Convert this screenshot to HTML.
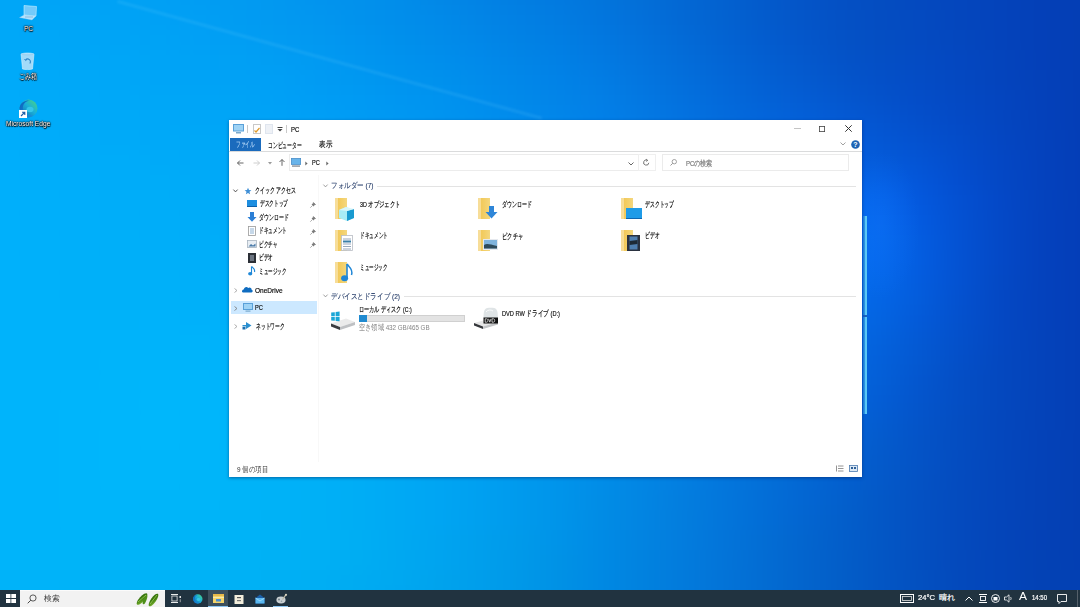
<!DOCTYPE html>
<html><head><meta charset="utf-8">
<style>
*{margin:0;padding:0;box-sizing:border-box}
html,body{width:1080px;height:607px;overflow:hidden}
body{position:relative;font-family:"Liberation Sans",sans-serif;background:#0a7fe0}
#bg{position:absolute;left:-40px;top:-40px;width:1160px;height:687px;filter:blur(8px)}
.a{position:absolute}
.t{position:absolute;white-space:nowrap;font-size:8px;color:#111;line-height:10px;transform-origin:0 0;-webkit-text-stroke:0.2px currentColor}
.l{font-size:7px}
.g{color:#7a7a7a}
.fd{position:absolute;width:12px;height:21px;background:linear-gradient(90deg,#f7dd98 0,#f7dd98 3px,#f2c95a 3px,#f3cf68 7px,#f4d77f 100%)}
.sep{position:absolute;background:#e3e3e3}
#win{position:absolute;left:229px;top:120px;width:633px;height:357px;background:#fff;box-shadow:0 1px 3px rgba(0,30,90,0.5)}
#taskbar{position:absolute;left:0;top:590px;width:1080px;height:17px;background:#213340}
svg{position:absolute;overflow:visible}
</style></head><body>
<div id="bg">
<div style="position:absolute;left:0;top:10px;width:1160px;height:20px;background:linear-gradient(90deg,#00a6f7 0px,#00a5f7 40px,#00a4f6 80px,#00a2f5 120px,#00a0f4 160px,#019ef3 200px,#019cf2 240px,#0299f1 280px,#0296ef 320px,#0293ed 360px,#028feb 400px,#028be9 440px,#0286e6 480px,#0281e4 520px,#027de1 560px,#0278de 600px,#0273db 640px,#036dd7 680px,#0367d3 720px,#0361cf 760px,#035bcb 800px,#0355c7 840px,#0450c4 880px,#044dc1 920px,#0449be 960px,#0446bc 1000px,#0443ba 1040px,#0440b7 1080px,#043eb5 1120px,#043cb3 1160px)"></div>
<div style="position:absolute;left:0;top:30px;width:1160px;height:20px;background:linear-gradient(90deg,#00a7f8 0px,#00a6f7 40px,#00a5f7 80px,#00a3f6 120px,#00a2f5 160px,#01a0f4 200px,#019df3 240px,#029bf1 280px,#0298f0 320px,#0294ee 360px,#0291ec 400px,#018dea 440px,#0288e7 480px,#0283e5 520px,#027ee2 560px,#027ae0 600px,#0275dc 640px,#036fd8 680px,#0368d4 720px,#0362d0 760px,#035bcc 800px,#0455c8 840px,#0450c4 880px,#044dc1 920px,#0449bf 960px,#0446bd 1000px,#0443ba 1040px,#0440b7 1080px,#043eb5 1120px,#043cb3 1160px)"></div>
<div style="position:absolute;left:0;top:50px;width:1160px;height:20px;background:linear-gradient(90deg,#00a8f8 0px,#00a7f8 40px,#00a6f7 80px,#00a5f7 120px,#00a3f6 160px,#00a1f5 200px,#019ff4 240px,#019cf2 280px,#0299f1 320px,#0296ef 360px,#0192ed 400px,#018eeb 440px,#018ae9 480px,#0285e6 520px,#0280e4 560px,#027ce1 600px,#0276de 640px,#0370da 680px,#0369d5 720px,#0363d1 760px,#035ccd 800px,#0456c9 840px,#0451c5 880px,#044dc2 920px,#044ac0 960px,#0446bd 1000px,#0443bb 1040px,#0440b8 1080px,#043eb5 1120px,#043cb3 1160px)"></div>
<div style="position:absolute;left:0;top:70px;width:1160px;height:20px;background:linear-gradient(90deg,#00a9f9 0px,#00a8f8 40px,#00a7f8 80px,#00a6f7 120px,#00a4f6 160px,#00a3f5 200px,#01a0f5 240px,#019ef3 280px,#029bf2 320px,#0298f0 360px,#0194ef 400px,#0090ec 440px,#018cea 480px,#0187e8 520px,#0182e5 560px,#017ee3 600px,#0278e0 640px,#0372dc 680px,#036bd7 720px,#0364d3 760px,#035dcf 800px,#0457cb 840px,#0452c6 880px,#044ec3 920px,#044ac1 960px,#0447be 1000px,#0443bb 1040px,#0440b8 1080px,#043eb5 1120px,#043bb3 1160px)"></div>
<div style="position:absolute;left:0;top:90px;width:1160px;height:20px;background:linear-gradient(90deg,#00aaf9 0px,#00a9f9 40px,#00a8f8 80px,#00a7f8 120px,#00a6f7 160px,#00a4f6 200px,#00a2f5 240px,#01a0f4 280px,#019df3 320px,#019af2 360px,#0196f0 400px,#0092ee 440px,#008eec 480px,#018aea 520px,#0185e7 560px,#0180e5 600px,#027ae2 640px,#0374de 680px,#036dd9 720px,#0366d5 760px,#035fd1 800px,#0459cd 840px,#0453c8 880px,#044fc5 920px,#044bc3 960px,#0447c0 1000px,#0444bc 1040px,#0440b9 1080px,#043eb6 1120px,#043bb3 1160px)"></div>
<div style="position:absolute;left:0;top:110px;width:1160px;height:20px;background:linear-gradient(90deg,#00abf9 0px,#00aaf9 40px,#00a9f9 80px,#00a8f8 120px,#00a7f7 160px,#00a5f7 200px,#00a3f6 240px,#01a1f5 280px,#019ff5 320px,#019bf3 360px,#0098f1 400px,#0094ef 440px,#0091ed 480px,#018ceb 520px,#0187e9 560px,#0182e7 600px,#027de4 640px,#0376e0 680px,#036fdc 720px,#0368d8 760px,#0361d4 800px,#045bd0 840px,#0455cb 880px,#0450c8 920px,#044cc5 960px,#0448c1 1000px,#0444bd 1040px,#0441b9 1080px,#043eb6 1120px,#043bb3 1160px)"></div>
<div style="position:absolute;left:0;top:130px;width:1160px;height:20px;background:linear-gradient(90deg,#00acfa 0px,#00abfa 40px,#00aaf9 80px,#00a9f9 120px,#00a8f8 160px,#00a7f7 200px,#00a5f7 240px,#00a3f6 280px,#00a0f6 320px,#009df5 360px,#009af3 400px,#0096f1 440px,#0093ef 480px,#008eed 520px,#0189ea 560px,#0284e8 600px,#037fe6 640px,#0378e2 680px,#0371de 720px,#036adb 760px,#0363d7 800px,#045dd4 840px,#0457cf 880px,#0452cb 920px,#044dc8 960px,#0449c3 1000px,#0445bf 1040px,#0441ba 1080px,#043eb6 1120px,#043bb4 1160px)"></div>
<div style="position:absolute;left:0;top:150px;width:1160px;height:20px;background:linear-gradient(90deg,#00acfa 0px,#00acfa 40px,#00abf9 80px,#00aaf9 120px,#00a9f8 160px,#00a8f8 200px,#00a6f7 240px,#00a4f7 280px,#00a2f7 320px,#009ff6 360px,#009bf4 400px,#0098f2 440px,#0094f0 480px,#0090ee 520px,#018bec 560px,#0286ea 600px,#0280e8 640px,#037ae4 680px,#0373e1 720px,#036cdd 760px,#0366db 800px,#0360d8 840px,#045ad4 880px,#0454d0 920px,#044fcb 960px,#044ac6 1000px,#0446c0 1040px,#0441bb 1080px,#043eb7 1120px,#043bb4 1160px)"></div>
<div style="position:absolute;left:0;top:170px;width:1160px;height:20px;background:linear-gradient(90deg,#00adfa 0px,#00adfa 40px,#00acfa 80px,#00abf9 120px,#00aaf8 160px,#00a9f8 200px,#00a8f7 240px,#00a6f7 280px,#00a3f7 320px,#00a0f6 360px,#009df4 400px,#009af3 440px,#0096f1 480px,#0091ef 520px,#018ced 560px,#0287eb 600px,#0282e9 640px,#037be6 680px,#0375e3 720px,#036ee0 760px,#0368de 800px,#0363dc 840px,#035dd9 880px,#0457d4 920px,#0451cf 960px,#044cc9 1000px,#0446c2 1040px,#0442bc 1080px,#043eb7 1120px,#043bb4 1160px)"></div>
<div style="position:absolute;left:0;top:190px;width:1160px;height:20px;background:linear-gradient(90deg,#00aefb 0px,#00aefb 40px,#00adfa 80px,#00acf9 120px,#00acf9 160px,#00aaf8 200px,#00a9f8 240px,#00a7f8 280px,#00a5f7 320px,#00a2f6 360px,#009ef5 400px,#009bf3 440px,#0097f2 480px,#0093f0 520px,#018eee 560px,#0288ec 600px,#0283ea 640px,#037de7 680px,#0377e5 720px,#0370e3 760px,#036be1 800px,#0366e0 840px,#0360de 880px,#045ad9 920px,#0454d4 960px,#044dcc 1000px,#0447c4 1040px,#0442bd 1080px,#043eb7 1120px,#043bb4 1160px)"></div>
<div style="position:absolute;left:0;top:210px;width:1160px;height:20px;background:linear-gradient(90deg,#00affb 0px,#00affb 40px,#00aefa 80px,#00adfa 120px,#00acf9 160px,#00acf8 200px,#00aaf8 240px,#00a8f8 280px,#00a6f7 320px,#00a3f7 360px,#00a0f5 400px,#009cf4 440px,#0098f2 480px,#0094f1 520px,#018fef 560px,#018aed 600px,#0284eb 640px,#037ee9 680px,#0378e7 720px,#0373e5 760px,#036de4 800px,#0369e4 840px,#0364e4 880px,#035ee2 920px,#0456d9 960px,#044ecf 1000px,#0448c5 1040px,#0442be 1080px,#043eb8 1120px,#043bb4 1160px)"></div>
<div style="position:absolute;left:0;top:230px;width:1160px;height:20px;background:linear-gradient(90deg,#00b0fb 0px,#00affb 40px,#00affa 80px,#00aefa 120px,#00adf9 160px,#00adf8 200px,#00abf8 240px,#00a9f8 280px,#00a7f8 320px,#00a4f7 360px,#00a1f6 400px,#009df4 440px,#0099f3 480px,#0095f1 520px,#0190ef 560px,#018bee 600px,#0285ec 640px,#0280ea 680px,#037ae8 720px,#0374e7 760px,#036fe7 800px,#036be7 840px,#0367e9 880px,#0363ea 920px,#0458dd 960px,#0450d1 1000px,#0448c7 1040px,#0443be 1080px,#043eb8 1120px,#043bb4 1160px)"></div>
<div style="position:absolute;left:0;top:250px;width:1160px;height:20px;background:linear-gradient(90deg,#00b0fb 0px,#00b0fb 40px,#00affa 80px,#00affa 120px,#00aef9 160px,#00adf9 200px,#00acf8 240px,#00aaf8 280px,#00a8f8 320px,#00a5f7 360px,#00a2f6 400px,#009ff5 440px,#009bf3 480px,#0096f2 520px,#0191f0 560px,#018cee 600px,#0287ec 640px,#0281eb 680px,#037bea 720px,#0376e9 760px,#0371e9 800px,#036dea 840px,#036aec 880px,#0365ec 920px,#045adf 960px,#0451d2 1000px,#0449c7 1040px,#0442bf 1080px,#043eb9 1120px,#043bb4 1160px)"></div>
<div style="position:absolute;left:0;top:270px;width:1160px;height:20px;background:linear-gradient(90deg,#00b1fb 0px,#00b0fb 40px,#00b0fa 80px,#00affa 120px,#00aff9 160px,#00aef9 200px,#00adf9 240px,#00acf8 280px,#00a9f8 320px,#00a7f7 360px,#00a3f6 400px,#00a0f5 440px,#009cf4 480px,#0097f2 520px,#0192f0 560px,#018def 600px,#0288ed 640px,#0282ec 680px,#037dea 720px,#0377ea 760px,#0373ea 800px,#036fec 840px,#036cee 880px,#0367ed 920px,#045ce0 960px,#0452d3 1000px,#0449c7 1040px,#0442be 1080px,#043eb8 1120px,#043bb4 1160px)"></div>
<div style="position:absolute;left:0;top:290px;width:1160px;height:20px;background:linear-gradient(90deg,#00b1fb 0px,#00b1fb 40px,#00b0fa 80px,#00b0f9 120px,#00aff9 160px,#00aff9 200px,#00aef9 240px,#00adf9 280px,#00abf8 320px,#00a8f8 360px,#00a5f7 400px,#00a1f5 440px,#009df4 480px,#0098f2 520px,#0193f1 560px,#018eef 600px,#0289ed 640px,#0283ec 680px,#037eeb 720px,#0378eb 760px,#0374eb 800px,#0370ec 840px,#036dee 880px,#0468ed 920px,#045de0 960px,#0452d2 1000px,#0449c7 1040px,#0442be 1080px,#043eb8 1120px,#043bb4 1160px)"></div>
<div style="position:absolute;left:0;top:310px;width:1160px;height:20px;background:linear-gradient(90deg,#00b2fb 0px,#00b1fb 40px,#00b1fa 80px,#00b0f9 120px,#00b0f9 160px,#00b0f9 200px,#00aff9 240px,#00aef9 280px,#00acf9 320px,#00a9f8 360px,#00a6f7 400px,#00a2f6 440px,#009ef4 480px,#0099f3 520px,#0194f1 560px,#018fef 600px,#028aee 640px,#0284ec 680px,#037eeb 720px,#0379eb 760px,#0375eb 800px,#0370eb 840px,#036cec 880px,#0467e9 920px,#045cde 960px,#0452d1 1000px,#0449c5 1040px,#0442bd 1080px,#043eb8 1120px,#043bb4 1160px)"></div>
<div style="position:absolute;left:0;top:330px;width:1160px;height:20px;background:linear-gradient(90deg,#00b2fb 0px,#00b2fb 40px,#00b2fa 80px,#00b1f9 120px,#00b1f9 160px,#00b1f9 200px,#00b0f9 240px,#00aff9 280px,#00adf9 320px,#00aaf8 360px,#00a7f7 400px,#00a3f6 440px,#009ff4 480px,#009af3 520px,#0195f1 560px,#0190ef 600px,#028aee 640px,#0285ec 680px,#027feb 720px,#037aea 760px,#0375ea 800px,#0370ea 840px,#036ce9 880px,#0465e5 920px,#045cdb 960px,#0451cf 1000px,#0448c4 1040px,#0442bd 1080px,#043eb8 1120px,#043bb4 1160px)"></div>
<div style="position:absolute;left:0;top:350px;width:1160px;height:20px;background:linear-gradient(90deg,#00b2fb 0px,#00b2fb 40px,#00b2fa 80px,#00b2fa 120px,#00b2f9 160px,#00b2fa 200px,#00b1fa 240px,#00b0f9 280px,#00aef9 320px,#00abf8 360px,#00a8f7 400px,#00a4f6 440px,#00a0f4 480px,#009bf3 520px,#0196f1 560px,#0191ef 600px,#028bee 640px,#0285ec 680px,#0280eb 720px,#037aea 760px,#0375e9 800px,#0370e8 840px,#036ae6 880px,#0464e1 920px,#045ad8 960px,#0451cd 1000px,#0448c3 1040px,#0442bc 1080px,#043eb7 1120px,#043bb4 1160px)"></div>
<div style="position:absolute;left:0;top:370px;width:1160px;height:20px;background:linear-gradient(90deg,#00b3fb 0px,#00b3fb 40px,#00b3fa 80px,#00b3fa 120px,#00b3fa 160px,#00b3fa 200px,#00b3fa 240px,#00b1fa 280px,#00aff9 320px,#00acf8 360px,#00a9f7 400px,#00a5f6 440px,#00a1f4 480px,#009cf3 520px,#0197f1 560px,#0191ef 600px,#028ced 640px,#0286eb 680px,#0280ea 720px,#037ae9 760px,#0375e7 800px,#036fe6 840px,#0469e3 880px,#0462dd 920px,#0459d4 960px,#0450ca 1000px,#0448c2 1040px,#0443bb 1080px,#043fb7 1120px,#043bb4 1160px)"></div>
<div style="position:absolute;left:0;top:390px;width:1160px;height:20px;background:linear-gradient(90deg,#00b3fb 0px,#00b3fb 40px,#00b3fb 80px,#00b3fa 120px,#00b4fa 160px,#00b4fa 200px,#00b4fa 240px,#00b2fa 280px,#00b0f9 320px,#00adf8 360px,#00aaf7 400px,#00a6f6 440px,#00a1f4 480px,#009df3 520px,#0198f1 560px,#0192ef 600px,#018ced 640px,#0286eb 680px,#0280e9 720px,#037ae7 760px,#0374e5 800px,#036ee3 840px,#0468e0 880px,#0460da 920px,#0458d1 960px,#044fc8 1000px,#0448c0 1040px,#0443bb 1080px,#043fb7 1120px,#043cb3 1160px)"></div>
<div style="position:absolute;left:0;top:410px;width:1160px;height:20px;background:linear-gradient(90deg,#00b3fb 0px,#00b4fb 40px,#00b4fb 80px,#00b4fb 120px,#00b5fa 160px,#00b5fb 200px,#00b5fb 240px,#00b3fa 280px,#00b1f9 320px,#00aef8 360px,#00aaf7 400px,#00a7f6 440px,#00a2f4 480px,#009df3 520px,#0098f1 560px,#0193ee 600px,#018dec 640px,#0286ea 680px,#0280e8 720px,#037ae6 760px,#0374e3 800px,#036de1 840px,#0466dd 880px,#045fd7 920px,#0456ce 960px,#044ec5 1000px,#0448bf 1040px,#0443ba 1080px,#043fb6 1120px,#043cb3 1160px)"></div>
<div style="position:absolute;left:0;top:430px;width:1160px;height:20px;background:linear-gradient(90deg,#00b4fb 0px,#00b4fb 40px,#00b4fb 80px,#00b5fb 120px,#00b5fb 160px,#00b6fb 200px,#00b6fb 240px,#00b4fa 280px,#00b1f9 320px,#00aff8 360px,#00abf7 400px,#00a7f6 440px,#00a3f4 480px,#009ef2 520px,#0099f0 560px,#0193ee 600px,#018deb 640px,#0287e9 680px,#0280e6 720px,#0379e4 760px,#0373e1 800px,#036cde 840px,#0465da 880px,#045dd5 920px,#0455cc 960px,#044ec4 1000px,#0448be 1040px,#0443ba 1080px,#043fb6 1120px,#043cb3 1160px)"></div>
<div style="position:absolute;left:0;top:450px;width:1160px;height:20px;background:linear-gradient(90deg,#00b4fb 0px,#00b4fb 40px,#00b4fb 80px,#00b5fb 120px,#00b6fb 160px,#00b7fb 200px,#00b6fb 240px,#00b5fa 280px,#00b2f9 320px,#00aff8 360px,#00acf7 400px,#00a8f6 440px,#00a4f4 480px,#009ff2 520px,#0099f0 560px,#0194ed 600px,#018dea 640px,#0287e8 680px,#0280e5 720px,#0379e2 760px,#0372df 800px,#036bdb 840px,#0464d7 880px,#045cd1 920px,#0454c9 960px,#044dc2 1000px,#0447bd 1040px,#0443b9 1080px,#043fb5 1120px,#043cb2 1160px)"></div>
<div style="position:absolute;left:0;top:470px;width:1160px;height:20px;background:linear-gradient(90deg,#00b4fb 0px,#00b4fb 40px,#00b4fb 80px,#00b5fb 120px,#00b6fb 160px,#00b7fb 200px,#00b6fa 240px,#00b5fa 280px,#00b2f9 320px,#00b0f8 360px,#00acf6 400px,#00a8f5 440px,#00a4f4 480px,#009ff2 520px,#009aef 560px,#0194ed 600px,#018dea 640px,#0287e7 680px,#0280e4 720px,#0379e1 760px,#0371dd 800px,#036ad9 840px,#0363d4 880px,#045bcd 920px,#0453c7 960px,#044dc1 1000px,#0447bd 1040px,#0442b8 1080px,#043fb5 1120px,#043cb2 1160px)"></div>
<div style="position:absolute;left:0;top:490px;width:1160px;height:20px;background:linear-gradient(90deg,#00b4fb 0px,#00b4fb 40px,#00b4fb 80px,#00b5fb 120px,#00b6fb 160px,#00b6fa 200px,#00b6fa 240px,#00b4f9 280px,#00b2f8 320px,#00b0f7 360px,#00adf6 400px,#00a9f5 440px,#00a5f3 480px,#00a0f1 520px,#009aef 560px,#0094ec 600px,#018de9 640px,#0286e5 680px,#037fe2 720px,#0378df 760px,#0371db 800px,#0369d7 840px,#0361d1 880px,#045acb 920px,#0453c6 960px,#044cc0 1000px,#0447bc 1040px,#0442b8 1080px,#043fb4 1120px,#043cb2 1160px)"></div>
<div style="position:absolute;left:0;top:510px;width:1160px;height:20px;background:linear-gradient(90deg,#00b4fb 0px,#00b4fb 40px,#00b4fb 80px,#00b5fa 120px,#00b6fa 160px,#00b6fa 200px,#00b5f9 240px,#00b4f8 280px,#00b2f8 320px,#00b0f7 360px,#00adf6 400px,#00a9f4 440px,#00a5f3 480px,#00a0f1 520px,#009aee 560px,#0094eb 600px,#018de8 640px,#0286e4 680px,#037fe1 720px,#0377dd 760px,#0370d9 800px,#0368d4 840px,#0360cf 880px,#0459c9 920px,#0452c4 960px,#044bbf 1000px,#0446bb 1040px,#0442b7 1080px,#043fb4 1120px,#043cb1 1160px)"></div>
<div style="position:absolute;left:0;top:530px;width:1160px;height:20px;background:linear-gradient(90deg,#00b4fb 0px,#00b4fb 40px,#00b4fb 80px,#00b5fa 120px,#00b5fa 160px,#00b5f9 200px,#00b5f9 240px,#00b4f8 280px,#00b2f7 320px,#00b0f6 360px,#00adf5 400px,#00a9f4 440px,#00a5f3 480px,#00a0f0 520px,#009aed 560px,#0094ea 600px,#018de6 640px,#0286e3 680px,#037edf 720px,#0377dc 760px,#036fd8 800px,#0367d3 840px,#0360cd 880px,#0358c7 920px,#0451c3 960px,#044bbe 1000px,#0446bb 1040px,#0442b7 1080px,#043fb3 1120px,#043cb1 1160px)"></div>
<div style="position:absolute;left:0;top:550px;width:1160px;height:20px;background:linear-gradient(90deg,#00b4fb 0px,#00b4fa 40px,#00b4fa 80px,#00b5fa 120px,#00b5f9 160px,#00b5f9 200px,#00b4f8 240px,#00b3f7 280px,#00b2f6 320px,#00b0f5 360px,#00adf4 400px,#00a9f3 440px,#00a5f2 480px,#00a0ef 520px,#009aec 560px,#0094e9 600px,#018ce5 640px,#0285e2 680px,#037ede 720px,#0376db 760px,#026ed7 800px,#0366d1 840px,#035fcb 880px,#0357c6 920px,#0450c2 960px,#044abe 1000px,#0445ba 1040px,#0442b6 1080px,#043fb3 1120px,#043db1 1160px)"></div>
<div style="position:absolute;left:0;top:570px;width:1160px;height:20px;background:linear-gradient(90deg,#00b4fa 0px,#00b4fa 40px,#00b4fa 80px,#00b4f9 120px,#00b4f9 160px,#00b4f8 200px,#00b4f7 240px,#00b3f7 280px,#00b1f6 320px,#00b0f5 360px,#00aef3 400px,#00a9f2 440px,#00a4f0 480px,#009fed 520px,#009aea 560px,#0093e8 600px,#008be5 640px,#0284e1 680px,#037dde 720px,#0375da 760px,#036ed5 800px,#0366cf 840px,#035eca 880px,#0357c5 920px,#0450c1 960px,#044abd 1000px,#0445b9 1040px,#0441b6 1080px,#043fb3 1120px,#043db1 1160px)"></div>
<div style="position:absolute;left:0;top:590px;width:1160px;height:20px;background:linear-gradient(90deg,#00b4fa 0px,#00b4fa 40px,#00b4f9 80px,#00b4f8 120px,#00b4f8 160px,#00b4f7 200px,#00b3f7 240px,#00b2f6 280px,#00b1f5 320px,#00aff4 360px,#00adf2 400px,#00a8f1 440px,#00a4ef 480px,#009fec 520px,#0099e9 560px,#0092e6 600px,#008ae4 640px,#0183e0 680px,#027cdd 720px,#0375d9 760px,#036dd4 800px,#0365ce 840px,#035ec9 880px,#0356c4 920px,#034fc0 960px,#0449bc 1000px,#0345b9 1040px,#0342b5 1080px,#033fb3 1120px,#043db1 1160px)"></div>
<div style="position:absolute;left:0;top:610px;width:1160px;height:20px;background:linear-gradient(90deg,#00b3f9 0px,#00b3f9 40px,#00b3f9 80px,#00b3f8 120px,#00b3f7 160px,#00b3f7 200px,#00b2f6 240px,#00b1f5 280px,#00b0f4 320px,#00aef3 360px,#00abf1 400px,#00a8f0 440px,#00a3ed 480px,#009eeb 520px,#0098e8 560px,#0091e5 600px,#0089e3 640px,#0182df 680px,#027bdc 720px,#0374d8 760px,#036dd3 800px,#0365cd 840px,#035ec8 880px,#0356c4 920px,#0350c0 960px,#0349bc 1000px,#0345b9 1040px,#0342b5 1080px,#0340b3 1120px,#033eb1 1160px)"></div>
<div style="position:absolute;left:0;top:630px;width:1160px;height:20px;background:linear-gradient(90deg,#00b3f9 0px,#00b3f9 40px,#00b3f8 80px,#00b3f7 120px,#00b3f7 160px,#00b2f6 200px,#00b2f5 240px,#00b0f4 280px,#00aff3 320px,#00adf2 360px,#00aaf1 400px,#00a6ef 440px,#00a2ec 480px,#009dea 520px,#0097e7 560px,#0090e4 600px,#0189e2 640px,#0182df 680px,#027bdb 720px,#0374d7 760px,#036cd2 800px,#0365cd 840px,#035ec8 880px,#0357c3 920px,#0350bf 960px,#034abc 1000px,#0346b9 1040px,#0343b6 1080px,#0340b3 1120px,#033eb2 1160px)"></div>
<div style="position:absolute;left:0;top:650px;width:1160px;height:20px;background:linear-gradient(90deg,#00b3f8 0px,#00b3f8 40px,#00b3f8 80px,#00b2f7 120px,#00b2f6 160px,#00b1f5 200px,#00b1f5 240px,#00aff4 280px,#00aef3 320px,#00acf1 360px,#00a9f0 400px,#00a5ee 440px,#00a1eb 480px,#009ce9 520px,#0096e6 560px,#008fe3 600px,#0188e1 640px,#0181de 680px,#027ada 720px,#0373d6 760px,#036cd1 800px,#0365cc 840px,#035ec8 880px,#0357c3 920px,#0351bf 960px,#034bbc 1000px,#0347b9 1040px,#0344b6 1080px,#0341b4 1120px,#033fb2 1160px)"></div>
</div>
<!-- streak -->
<div class="a" style="left:118px;top:-0.5px;width:440px;height:3px;background:rgba(130,215,255,0.13);transform-origin:0 0;transform:rotate(15.4deg);filter:blur(0.8px)"></div>
<!-- logo edge bar -->
<div class="a" style="left:840px;top:150px;width:80px;height:150px;background:radial-gradient(closest-side,rgba(30,125,255,0.22),rgba(30,125,255,0))"></div>
<div class="a" style="left:863px;top:215.5px;width:4px;height:198.5px;background:linear-gradient(90deg,#1f7ee0 0,#2f9ae8 45%,#58c6f6 55%,#62d0fa 85%,#3aa0ea)"></div>
<div class="a" style="left:863px;top:314.5px;width:4px;height:2.5px;background:#1a62c0"></div>

<!-- desktop icons -->
<svg style="left:19px;top:5px" width="19" height="16" viewBox="0 0 19 16"><path d="M5 0.5 L17.5 1.5 L17 11 L5 10Z" fill="rgba(200,235,255,0.55)" stroke="rgba(230,248,255,0.7)" stroke-width="0.7"/><path d="M6.2 2 L16.4 2.8 L16 9.8 L6.2 9.1Z" fill="rgba(120,200,250,0.6)"/><path d="M0.5 12.5 L5 10 L17 11 L13 15Z" fill="rgba(225,243,255,0.8)" stroke="rgba(150,205,240,0.6)" stroke-width="0.5"/><path d="M6 12 H14" stroke="rgba(40,90,140,0.5)" stroke-width="0.6"/></svg>
<div class="a" style="left:24px;top:24.5px;font-size:6.5px;line-height:7px;color:#fff;text-shadow:0.5px 0.5px 1px #000,0 0 1px #000,0 0 1.5px #000,0 0 2px #000;font-family:'Liberation Sans',sans-serif">PC</div>
<svg style="left:20px;top:52px" width="15" height="18" viewBox="0 0 15 18"><path d="M1 2 C4 0.6 11 0.6 14 2 L12.5 17 C10 17.8 5 17.8 2.5 17Z" fill="rgba(215,235,250,0.75)" stroke="rgba(240,250,255,0.8)" stroke-width="0.6"/><path d="M1 2 C4 3.4 11 3.4 14 2" stroke="rgba(160,200,230,0.9)" stroke-width="0.7" fill="none"/><path d="M5.5 8 A2.6 2.6 0 1 1 9.8 11.5" stroke="#2f86c8" stroke-width="1.1" fill="none"/><path d="M4.5 7 L5.6 8.6 L7 7.4" stroke="#2f86c8" stroke-width="0.9" fill="none"/></svg>
<div class="t" style="left:19px;top:72px;color:#fff;-webkit-text-stroke:0;text-shadow:0.5px 0.5px 1px #000,0 0 1px #000,0 0 1.5px #000,0 0 2px #000;--w:18;transform:scaleX(0.7500)">ごみ箱</div>
<svg style="left:18px;top:99px" width="20" height="19" viewBox="0 0 20 19"><defs><linearGradient id="eg" x1="1" y1="0" x2="0" y2="1"><stop offset="0" stop-color="#50d87a"/><stop offset="0.45" stop-color="#1ab0d8"/><stop offset="1" stop-color="#0c5fb0"/></linearGradient><linearGradient id="eg3" x1="0" y1="0" x2="1" y2="1"><stop offset="0" stop-color="#0d63b8"/><stop offset="1" stop-color="#1b8fe0"/></linearGradient></defs><circle cx="10.5" cy="9.5" r="9" fill="url(#eg)"/><path d="M1.6 8.5 C2.5 3 8 0.8 12.5 1.6 C7 2 4 6 5.2 10.8 C6.2 14.8 10.5 17 15 16.2 C11 19.5 2.5 18 1.6 8.5Z" fill="url(#eg3)"/><ellipse cx="12" cy="10.5" rx="3.5" ry="2.8" fill="#36c6e8"/></svg>
<svg style="left:19px;top:110px" width="8" height="8" viewBox="0 0 8 8"><rect x="0" y="0" width="8" height="8" fill="#fff"/><path d="M2 6 L5.5 2.5 M3 2.3 H5.8 V5" stroke="#1f5fa8" stroke-width="1.1" fill="none"/></svg>
<div class="t l" style="left:6px;top:119px;color:#fff;-webkit-text-stroke:0;text-shadow:0.5px 0.5px 1px #000,0 0 1px #000,0 0 1.5px #000,0 0 2px #000;--w:44.4;transform:scaleX(0.9510)">Microsoft Edge</div>

<div id="win"></div>
<!-- ===== title bar ===== -->
<svg style="left:233px;top:124px" width="11" height="10" viewBox="0 0 11 10"><rect x="0.5" y="0.5" width="10" height="6.5" fill="#9fd3f5" stroke="#5aa0d8" stroke-width="1"/><rect x="3" y="8" width="5" height="1.5" fill="#7aa9cc"/></svg>
<div class="a" style="left:247px;top:125px;width:1px;height:8px;background:#c9c9c9"></div>
<svg style="left:253px;top:124px" width="8" height="10" viewBox="0 0 8 10"><rect x="0.5" y="0.5" width="7" height="9" fill="#fff" stroke="#c8c8c8" stroke-width="1"/><path d="M1.5 6.5 L3 8 L6.5 4" stroke="#e09a2a" stroke-width="1.2" fill="none"/></svg>
<svg style="left:265px;top:124px" width="8" height="10" viewBox="0 0 8 10"><rect x="0" y="0" width="8" height="10" fill="#dfe5ee"/><rect x="1" y="1" width="6" height="8" fill="#eef1f6"/></svg>
<svg style="left:277px;top:127px" width="6" height="5" viewBox="0 0 6 5"><rect x="0.5" y="0" width="5" height="1" fill="#444"/><path d="M0.5 2 L5.5 2 L3 4.6Z" fill="#444"/></svg>
<div class="a" style="left:286px;top:125px;width:1px;height:8px;background:#c9c9c9"></div>
<div class="t l" style="left:291px;top:124.5px;--w:8.3;transform:scaleX(0.8526)">PC</div>
<div class="a" style="left:794px;top:128px;width:7px;height:1px;background:#c4c4c4"></div>
<svg style="left:819px;top:126px" width="6" height="6" viewBox="0 0 6 6"><rect x="0.4" y="0.4" width="5.2" height="5.2" fill="none" stroke="#444" stroke-width="0.8"/></svg>
<svg style="left:845px;top:125px" width="7" height="7" viewBox="0 0 7 7"><path d="M0.3 0.3 L6.7 6.7 M6.7 0.3 L0.3 6.7" stroke="#333" stroke-width="1"/></svg>

<!-- ===== ribbon tabs ===== -->
<div class="a" style="left:230px;top:138px;width:31px;height:13px;background:#1b6bbd"></div>
<div class="t" style="left:236.4px;top:140px;color:#c4e2ff;-webkit-text-stroke:0;--w:18.8;transform:scaleX(0.5875)">ファイル</div>
<div class="t" style="left:268.2px;top:140.6px;--w:33.7;transform:scaleX(0.6018)">コンピューター</div>
<div class="t" style="left:318.7px;top:140px;--w:13;transform:scaleX(0.8125)">表示</div>
<svg style="left:840px;top:142px" width="6" height="4" viewBox="0 0 6 4"><path d="M0.5 0.5 L3 3 L5.5 0.5" stroke="#888" stroke-width="0.8" fill="none"/></svg>
<svg style="left:851px;top:140px" width="9" height="9" viewBox="0 0 9 9"><circle cx="4.5" cy="4.5" r="4.3" fill="#1e64b4"/><text x="4.5" y="7.3" font-size="7" font-weight="bold" text-anchor="middle" fill="#fff" font-family="Liberation Sans">?</text></svg>
<div class="a" style="left:229px;top:151px;width:633px;height:1px;background:#dadbdc"></div>

<!-- ===== nav row ===== -->
<svg style="left:237px;top:160px" width="7" height="6" viewBox="0 0 7 6"><path d="M0.5 3 H6.5 M3 0.5 L0.5 3 L3 5.5" stroke="#555" stroke-width="0.9" fill="none"/></svg>
<svg style="left:253px;top:160px" width="7" height="6" viewBox="0 0 7 6"><path d="M0.5 3 H6.5 M4 0.5 L6.5 3 L4 5.5" stroke="#c8c8c8" stroke-width="0.9" fill="none"/></svg>
<svg style="left:268px;top:162px" width="4" height="3" viewBox="0 0 4 3"><path d="M0 0 L4 0 L2 2.5Z" fill="#999"/></svg>
<svg style="left:279px;top:159px" width="6" height="7" viewBox="0 0 6 7"><path d="M3 6.8 V0.6 M0.5 3 L3 0.5 L5.5 3" stroke="#555" stroke-width="0.9" fill="none"/></svg>
<div class="a" style="left:289px;top:154px;width:350px;height:17px;border:1px solid #ececec;border-right:none"></div>
<div class="a" style="left:638px;top:154px;width:18px;height:17px;border:1px solid #efefef"></div>
<svg style="left:291px;top:158px" width="10" height="9" viewBox="0 0 10 9"><rect x="0.4" y="0.4" width="9.2" height="6" fill="#68b4ea" stroke="#4b8fc8" stroke-width="0.8"/><rect x="1" y="7.6" width="8" height="0.9" fill="#4a5560"/></svg>
<svg style="left:304.5px;top:161px" width="3" height="5" viewBox="0 0 3 5"><path d="M0.3 0.6 L2.6 2.5 L0.3 4.4Z" fill="#666"/></svg>
<div class="t l" style="left:311.6px;top:158px;--w:7.8;transform:scaleX(0.8013)">PC</div>
<svg style="left:325.5px;top:161px" width="3" height="5" viewBox="0 0 3 5"><path d="M0.3 0.6 L2.6 2.5 L0.3 4.4Z" fill="#666"/></svg>
<svg style="left:628px;top:162px" width="6" height="4" viewBox="0 0 6 4"><path d="M0.5 0.5 L3 3 L5.5 0.5" stroke="#555" stroke-width="0.9" fill="none"/></svg>
<svg style="left:643px;top:159px" width="7" height="7" viewBox="0 0 7 7"><path d="M5.8 3.8 A2.6 2.6 0 1 1 4.3 1.2 M3.2 0.2 L4.6 1.3 L3.5 2.6" stroke="#555" stroke-width="0.8" fill="none"/></svg>
<div class="a" style="left:662px;top:154px;width:187px;height:17px;border:1px solid #ebebeb"></div>
<svg style="left:670px;top:159px" width="7" height="7" viewBox="0 0 7 7"><circle cx="4.3" cy="2.7" r="2.2" stroke="#8a8a8a" stroke-width="0.8" fill="none"/><path d="M2.7 4.3 L0.5 6.5" stroke="#8a8a8a" stroke-width="0.9"/></svg>
<div class="t g" style="left:685.8px;top:158.9px;--w:26.5;transform:scaleX(0.7544)">PCの検索</div>

<!-- ===== nav pane ===== -->
<div class="a" style="left:318px;top:175px;width:1px;height:287px;background:#f8f8f8"></div>
<svg style="left:233px;top:189px" width="5" height="4" viewBox="0 0 5 4"><path d="M0.4 0.6 L2.5 2.9 L4.6 0.6" stroke="#444" stroke-width="0.9" fill="none"/></svg>
<svg style="left:244px;top:187px" width="8" height="8" viewBox="0 0 8 8"><path d="M4 0.8 L5 3 L7.4 3.2 L5.5 4.8 L6.1 7.3 L4 5.9 L1.9 7.3 L2.5 4.8 L0.6 3.2 L3 3Z" fill="#3f8fd6"/></svg>
<div class="t" style="left:255.4px;top:185.7px;--w:41.3;transform:scaleX(0.6235)">クイック アクセス</div>
<div class="a" style="left:247px;top:200px;width:10px;height:7px;background:#1d8ee0;border-bottom:1px solid #0d5fa8"></div>
<div class="t" style="left:259.9px;top:199px;--w:28.1;transform:scaleX(0.5854)">デスクトップ</div>
<svg style="left:247px;top:212px" width="10" height="10" viewBox="0 0 10 10"><path d="M3 0 H7 V5 H9.5 L5 9.8 L0.5 5 H3Z" fill="#2b7fd6"/></svg>
<div class="t" style="left:259.3px;top:213px;--w:29.7;transform:scaleX(0.6188)">ダウンロード</div>
<svg style="left:248px;top:226px" width="8" height="10" viewBox="0 0 8 10"><rect x="0.5" y="0.5" width="7" height="9" fill="#fff" stroke="#9a9a9a" stroke-width="0.8"/><path d="M2 3 H6 M2 5 H6 M2 7 H6" stroke="#5b8fc0" stroke-width="0.7"/></svg>
<div class="t" style="left:259.3px;top:226px;--w:28;transform:scaleX(0.5833)">ドキュメント</div>
<svg style="left:247px;top:240px" width="10" height="8" viewBox="0 0 10 8"><rect x="0.5" y="0.5" width="9" height="7" fill="#e8eef4" stroke="#a8b4c0" stroke-width="0.8"/><path d="M1.5 6.5 L4 4 L6 5.5 L8.5 3.5 V6.5Z" fill="#4a7aa8"/></svg>
<div class="t" style="left:259.3px;top:240.2px;--w:18.1;transform:scaleX(0.5656)">ピクチャ</div>
<svg style="left:248px;top:253px" width="8" height="10" viewBox="0 0 8 10"><rect x="0" y="0" width="8" height="10" fill="#2b2f36"/><rect x="2" y="2" width="4" height="6" fill="#6b7480"/></svg>
<div class="t" style="left:259.3px;top:253.4px;--w:14;transform:scaleX(0.5833)">ビデオ</div>
<svg style="left:248px;top:266px" width="9" height="10" viewBox="0 0 9 10"><path d="M3.5 0.5 V7.5 M3.5 0.5 C5 2 7.5 3 6.5 6" stroke="#1f88d8" stroke-width="1.1" fill="none"/><ellipse cx="2.2" cy="7.8" rx="2.1" ry="1.7" fill="#1f88d8"/></svg>
<div class="t" style="left:259.3px;top:266.6px;--w:27.2;transform:scaleX(0.5667)">ミュージック</div>

<svg style="left:234px;top:288px" width="4" height="5" viewBox="0 0 4 5"><path d="M0.5 0.5 L3 2.5 L0.5 4.5" stroke="#999" stroke-width="0.8" fill="none"/></svg>
<svg style="left:242px;top:286px" width="11" height="7" viewBox="0 0 11 7"><path d="M1 6.5 C-0.5 6.5 -0.3 3.6 1.8 3.6 C2 1.2 4.8 0.3 6.2 2 C7.5 0.8 9.8 1.8 9.6 3.8 C11.2 3.9 11 6.5 9.5 6.5Z" fill="#0f6cc0"/></svg>
<div class="t l" style="left:254.7px;top:286px;--w:27.6;transform:scaleX(0.9331)">OneDrive</div>
<div class="a" style="left:231px;top:301px;width:86px;height:13px;background:#cce8ff"></div>
<svg style="left:234px;top:306px" width="4" height="5" viewBox="0 0 4 5"><path d="M0.5 0.5 L3 2.5 L0.5 4.5" stroke="#777" stroke-width="0.8" fill="none"/></svg>
<svg style="left:243px;top:303px" width="10" height="9" viewBox="0 0 10 9"><rect x="0.5" y="0.5" width="9" height="6" fill="#9fd3f5" stroke="#5aa0d8" stroke-width="1"/><rect x="2.5" y="7.5" width="5" height="1.2" fill="#7aa9cc"/></svg>
<div class="t l" style="left:254.7px;top:303px;--w:7.9;transform:scaleX(0.8116)">PC</div>
<svg style="left:234px;top:324px" width="4" height="5" viewBox="0 0 4 5"><path d="M0.5 0.5 L3 2.5 L0.5 4.5" stroke="#999" stroke-width="0.8" fill="none"/></svg>
<svg style="left:242px;top:321px" width="10" height="9" viewBox="0 0 10 9"><path d="M0.5 4 H4 V1 L9.5 4.5 L4 8 V5.5 H0.5Z" fill="#2a8fd0"/><rect x="0.5" y="6" width="3" height="2.5" fill="#1d6fb0"/></svg>
<div class="t" style="left:255.7px;top:321.5px;--w:28.6;transform:scaleX(0.5958)">ネットワーク</div>

<svg style="left:310px;top:202px" width="6" height="6" viewBox="0 0 6 6"><path d="M0.3 5.7 L2.2 3.8" stroke="#8a8a8a" stroke-width="0.7"/><path d="M1.6 2.6 L3.4 0.8 L5.2 2.6 L3.4 4.4Z" fill="#7a7a7a"/><path d="M3.2 0.3 L5.7 2.8" stroke="#7a7a7a" stroke-width="0.9"/></svg>
<svg style="left:310px;top:215.5px" width="6" height="6" viewBox="0 0 6 6"><path d="M0.3 5.7 L2.2 3.8" stroke="#8a8a8a" stroke-width="0.7"/><path d="M1.6 2.6 L3.4 0.8 L5.2 2.6 L3.4 4.4Z" fill="#7a7a7a"/><path d="M3.2 0.3 L5.7 2.8" stroke="#7a7a7a" stroke-width="0.9"/></svg>
<svg style="left:310px;top:229px" width="6" height="6" viewBox="0 0 6 6"><path d="M0.3 5.7 L2.2 3.8" stroke="#8a8a8a" stroke-width="0.7"/><path d="M1.6 2.6 L3.4 0.8 L5.2 2.6 L3.4 4.4Z" fill="#7a7a7a"/><path d="M3.2 0.3 L5.7 2.8" stroke="#7a7a7a" stroke-width="0.9"/></svg>
<svg style="left:310px;top:242.2px" width="6" height="6" viewBox="0 0 6 6"><path d="M0.3 5.7 L2.2 3.8" stroke="#8a8a8a" stroke-width="0.7"/><path d="M1.6 2.6 L3.4 0.8 L5.2 2.6 L3.4 4.4Z" fill="#7a7a7a"/><path d="M3.2 0.3 L5.7 2.8" stroke="#7a7a7a" stroke-width="0.9"/></svg>
<!-- ===== content: folders ===== -->
<svg style="left:323px;top:184px" width="5" height="4" viewBox="0 0 5 4"><path d="M0.4 0.6 L2.5 2.9 L4.6 0.6" stroke="#888" stroke-width="0.8" fill="none"/></svg>
<div class="t" style="left:330.8px;top:181px;color:#213866;-webkit-text-stroke:0.1px currentColor;--w:42.5;transform:scaleX(0.8173)">フォルダー (7)</div>
<div class="sep" style="left:377px;top:186px;width:479px;height:1px"></div>

<div class="fd" style="left:335px;top:198px"></div>
<svg style="left:339px;top:207px" width="15" height="14" viewBox="0 0 15 14"><path d="M0 3 L7 0 L15 3 V11 L8 14 L0 11Z" fill="#a9ecf6"/><path d="M8 4 L15 2 V11 L8 14Z" fill="#1a9ad0"/><path d="M0 3 L8 4 L15 2 L7 0Z" fill="#d8f6fb"/></svg>
<div class="t" style="left:360px;top:200.2px;--w:40.5;transform:scaleX(0.6699)">3D オブジェクト</div>

<div class="fd" style="left:478px;top:198px"></div>
<svg style="left:485px;top:206px" width="13" height="13" viewBox="0 0 13 13"><path d="M4 0 H9 V6 H12.5 L6.5 12.5 L0.5 6 H4Z" fill="#2f86d8"/></svg>
<div class="t" style="left:501.7px;top:200px;--w:30;transform:scaleX(0.6250)">ダウンロード</div>

<div class="fd" style="left:621px;top:198px"></div>
<div class="a" style="left:626px;top:208px;width:16px;height:11px;background:#1e9be8;border-bottom:1px solid #0d66b0"></div>
<div class="t" style="left:645px;top:200px;--w:29;transform:scaleX(0.6042)">デスクトップ</div>

<div class="fd" style="left:335px;top:230px"></div>
<svg style="left:341px;top:235px" width="12" height="16" viewBox="0 0 12 16"><rect x="0.5" y="0.5" width="11" height="15" fill="#fff" stroke="#b8bcc4" stroke-width="0.8"/><path d="M2 4 H10 M2 6.5 H10 M2 9 H10 M2 11.5 H10 M2 14 H10" stroke="#7d93ac" stroke-width="0.8"/><rect x="2" y="5.5" width="8" height="2" fill="#3a7fa8"/></svg>
<div class="t" style="left:360px;top:230.8px;--w:28;transform:scaleX(0.5833)">ドキュメント</div>

<div class="fd" style="left:478px;top:230px"></div>
<svg style="left:483px;top:239px" width="15" height="11" viewBox="0 0 15 11"><rect x="0" y="0" width="15" height="11" fill="#e6e9ee"/><rect x="1" y="1" width="13" height="8.5" fill="#7fb3dc"/><path d="M1 6 C4 4 7 5.5 14 7 V9.5 H1Z" fill="#2e4a5a"/></svg>
<div class="t" style="left:501.7px;top:231.5px;--w:21.1;transform:scaleX(0.6594)">ピクチャ</div>

<div class="fd" style="left:621px;top:230px"></div>
<svg style="left:627px;top:235px" width="13" height="16" viewBox="0 0 13 16"><rect x="0" y="0" width="13" height="16" fill="#2a3240"/><rect x="2.5" y="1.5" width="8" height="13" fill="#4f7fb0"/><path d="M2.5 6 L10.5 5 V9 L2.5 10Z" fill="#1d2a36"/></svg>
<div class="t" style="left:645px;top:231px;--w:14.4;transform:scaleX(0.6000)">ビデオ</div>

<div class="fd" style="left:335px;top:262px"></div>
<svg style="left:341px;top:263px" width="13" height="19" viewBox="0 0 13 19"><path d="M6 1 V15" stroke="#1f86d6" stroke-width="1.6"/><path d="M6 1 C8 4 12.5 6 10.5 12" stroke="#1f86d6" stroke-width="1.5" fill="none"/><ellipse cx="3.6" cy="15.3" rx="3.5" ry="3" fill="#1f86d6"/></svg>
<div class="t" style="left:360px;top:262.5px;--w:27.2;transform:scaleX(0.5667)">ミュージック</div>

<!-- ===== content: drives ===== -->
<svg style="left:323px;top:294px" width="5" height="4" viewBox="0 0 5 4"><path d="M0.4 0.6 L2.5 2.9 L4.6 0.6" stroke="#888" stroke-width="0.8" fill="none"/></svg>
<div class="t" style="left:331px;top:291.5px;color:#213866;-webkit-text-stroke:0.1px currentColor;--w:69;transform:scaleX(0.8214)">デバイスとドライブ (2)</div>
<div class="sep" style="left:404px;top:296px;width:452px;height:1px"></div>

<svg style="left:330px;top:311px" width="26" height="20" viewBox="0 0 26 20"><path d="M1 12.5 L16 7.5 L25 11 L10 16Z" fill="#ebebeb"/><path d="M1 12.5 L10 16 V19 L1 15.5Z" fill="#3a3c40"/><path d="M10 16 L25 11 V14 L10 19Z" fill="#bfc1c4"/><path d="M1.2 1.6 L4.8 1.2 V5 H1.2Z M5.6 1.1 L9.6 0.6 V5 H5.6Z M1.2 5.8 H4.8 V9.8 L1.2 9.4Z M5.6 5.8 H9.6 V10.3 L5.6 9.9Z" fill="#1aa6d6"/></svg>
<div class="t" style="left:359.4px;top:304.7px;--w:52.6;transform:scaleX(0.6432)">ローカル ディスク (C:)</div>
<div class="a" style="left:359px;top:314.5px;width:106px;height:7px;background:#e3e3e3;border:0.5px solid #d0d0d0"></div>
<div class="a" style="left:359px;top:314.5px;width:8px;height:7px;background:#1f8ad0"></div>
<div class="t g" style="left:359.4px;top:322.8px;color:#8a8a8a;-webkit-text-stroke:0.05px currentColor;--w:70.6;transform:scaleX(0.7784)">空き領域 432 GB/465 GB</div>

<svg style="left:473px;top:307px" width="26" height="23" viewBox="0 0 26 23"><path d="M10.5 11 C10.5 2 12 0.8 17.7 0.8 C23.4 0.8 24.9 2 24.9 11Z" fill="#dfe4e6"/><path d="M13 5 A5 5 0 0 1 20 4" stroke="#fff" stroke-width="1" fill="none" opacity="0.8"/><path d="M1 16 L14 12.5 L25 15 L10 19.5Z" fill="#e6e6e6"/><path d="M1 16 L10 19.5 V22 L1 18.5Z" fill="#35373b"/><path d="M10 19.5 L25 15 V17.5 L10 22Z" fill="#c2c4c6"/><rect x="10.5" y="10.5" width="14.5" height="6" fill="#111"/><path d="M12.2 11.8 H13.6 C14.6 11.8 14.9 12.6 14.9 13.5 C14.9 14.4 14.6 15.2 13.6 15.2 H12.2Z M15.6 11.8 L16.8 15.2 L18 11.8 M19 11.8 H20.4 C21.4 11.8 21.7 12.6 21.7 13.5 C21.7 14.4 21.4 15.2 20.4 15.2 H19Z" stroke="#fff" stroke-width="0.7" fill="none"/></svg>
<div class="t" style="left:502px;top:309px;--w:58;transform:scaleX(0.7066)">DVD RW ドライブ (D:)</div>

<!-- ===== status bar ===== -->
<div class="t" style="left:237px;top:465px;color:#333;-webkit-text-stroke:0;--w:31;transform:scaleX(0.8016)">9 個の項目</div>
<svg style="left:836px;top:465px" width="8" height="7" viewBox="0 0 8 7"><path d="M0.5 0.5 V6.5 M2 1 H7.5 M2 3.5 H7.5 M2 6 H7.5" stroke="#7a7a7a" stroke-width="0.8"/></svg>
<svg style="left:849px;top:465px" width="9" height="7" viewBox="0 0 9 7"><rect x="0.5" y="0.5" width="8" height="6" fill="#dce8f4" stroke="#4b7bb0" stroke-width="0.8"/><rect x="2" y="2" width="2" height="2" fill="#2d5f96"/><rect x="5" y="2" width="2" height="2" fill="#2d5f96"/></svg>

<!-- ===== taskbar ===== -->
<div id="taskbar"></div>
<svg style="left:6px;top:594px" width="10" height="9" viewBox="0 0 10 9"><path d="M0 0 H4.5 V4.1 H0Z M5.3 0 H10 V4.1 H5.3Z M0 4.9 H4.5 V9 H0Z M5.3 4.9 H10 V9 H5.3Z" fill="#fff"/></svg>
<div class="a" style="left:20px;top:590px;width:145px;height:17px;background:#f2f2f2;border-top:1px solid #fbfbfb"></div>
<svg style="left:27px;top:594px" width="10" height="10" viewBox="0 0 10 10"><circle cx="6" cy="4" r="3.1" stroke="#333" stroke-width="0.8" fill="none"/><path d="M3.8 6.2 L0.7 9.3" stroke="#333" stroke-width="0.9"/></svg>
<div class="t" style="left:43.7px;top:594px;color:#333;-webkit-text-stroke:0;--w:15.6;transform:scaleX(0.9750)">検索</div>
<svg style="left:134px;top:590px" width="28" height="17" viewBox="0 0 28 17"><defs><linearGradient id="lf" x1="0" y1="1" x2="1" y2="0"><stop offset="0" stop-color="#8bbf3a"/><stop offset="0.5" stop-color="#3f7f10"/><stop offset="1" stop-color="#2f6a0a"/></linearGradient></defs><ellipse cx="8" cy="9" rx="7.5" ry="2.6" transform="rotate(-48 8 9)" fill="url(#lf)"/><ellipse cx="11" cy="9.5" rx="5" ry="1.6" transform="rotate(-70 11 9.5)" fill="#4e8f1a"/><ellipse cx="19.5" cy="10" rx="7.5" ry="2.6" transform="rotate(-55 19.5 10)" fill="url(#lf)"/><path d="M4 12 L12 5 M16 14 L23 5" stroke="#c9ec7a" stroke-width="0.7" opacity="0.8"/></svg>
<svg style="left:170.5px;top:594px" width="11" height="9" viewBox="0 0 11 9"><rect x="0" y="0" width="7" height="0.9" fill="#fff"/><rect x="0" y="8.1" width="7" height="0.9" fill="#fff"/><rect x="0.9" y="2" width="5.2" height="5" stroke="#e8e8e8" stroke-width="0.8" fill="none"/><circle cx="9.2" cy="3" r="0.9" fill="#fff"/><rect x="8.8" y="5.2" width="0.8" height="3" fill="#bbb"/></svg>
<svg style="left:192px;top:593.5px" width="11" height="10" viewBox="0 0 20 19"><defs><linearGradient id="egt" x1="1" y1="0" x2="0" y2="1"><stop offset="0" stop-color="#50d87a"/><stop offset="0.45" stop-color="#1ab0d8"/><stop offset="1" stop-color="#0c5fb0"/></linearGradient><linearGradient id="egt3" x1="0" y1="0" x2="1" y2="1"><stop offset="0" stop-color="#0d63b8"/><stop offset="1" stop-color="#1b8fe0"/></linearGradient></defs><circle cx="10.5" cy="9.5" r="9" fill="url(#egt)"/><path d="M1.6 8.5 C2.5 3 8 0.8 12.5 1.6 C7 2 4 6 5.2 10.8 C6.2 14.8 10.5 17 15 16.2 C11 19.5 2.5 18 1.6 8.5Z" fill="url(#egt3)"/><ellipse cx="12" cy="10.5" rx="3.5" ry="2.8" fill="#36c6e8"/></svg>
<div class="a" style="left:208px;top:590px;width:20px;height:17px;background:#3d4f5c"></div>
<div class="a" style="left:208px;top:606px;width:20px;height:1px;background:#8ac4f0"></div>
<svg style="left:213px;top:594px" width="11" height="9" viewBox="0 0 11 9"><rect x="0" y="0" width="11" height="9" fill="#f3d46a"/><rect x="0" y="0" width="11" height="2" fill="#e8b94a"/><rect x="3" y="5" width="5" height="2.5" fill="#4a8fd0"/><rect x="0" y="3" width="11" height="1" fill="#fbe9a8"/></svg>
<svg style="left:234px;top:595px" width="10" height="9" viewBox="0 0 10 9"><rect x="0.5" y="0" width="9" height="9" fill="#f2eedc"/><rect x="3" y="2" width="4" height="1.2" fill="#555"/><rect x="3" y="5" width="4" height="1.2" fill="#777"/></svg>
<svg style="left:255px;top:594px" width="10" height="10" viewBox="0 0 10 10"><path d="M0.5 4 L5 0.5 L9.5 4 V9.5 H0.5Z" fill="#1a5fa8"/><path d="M0.5 4 H9.5 V9.5 H0.5Z" fill="#5ab8f0"/><path d="M0.5 4 L5 7 L9.5 4" stroke="#a8e0fb" stroke-width="0.8" fill="none"/></svg>
<svg style="left:276px;top:593px" width="12" height="11" viewBox="0 0 12 11"><ellipse cx="5" cy="7" rx="4.6" ry="3.4" fill="#c9cfd2"/><circle cx="3" cy="6.5" r="0.9" fill="#6a7a80"/><circle cx="5.5" cy="8.3" r="0.8" fill="#8a9aa0"/><path d="M6.5 6.5 L9.8 1.8" stroke="#bdb8a6" stroke-width="1.3"/><circle cx="10" cy="1.8" r="1.1" fill="#d8d3c0"/></svg>
<div class="a" style="left:273px;top:606px;width:15px;height:1px;background:#8ac4f0"></div>
<!-- tray -->
<svg style="left:900px;top:594px" width="14" height="9" viewBox="0 0 14 9"><rect x="0.5" y="0.5" width="13" height="8" stroke="#fff" stroke-width="1" fill="none"/><rect x="2.5" y="2.5" width="9" height="4" stroke="#ddd" stroke-width="0.8" fill="none"/></svg>
<div class="t l" style="left:918px;top:593px;color:#fff;--w:17;transform:scaleX(1.0869)">24°C</div>
<div class="t" style="left:939px;top:593px;color:#fff;--w:16;transform:scaleX(1.0000)">晴れ</div>
<svg style="left:965px;top:596px" width="8" height="5" viewBox="0 0 8 5"><path d="M0.5 4.5 L4 1 L7.5 4.5" stroke="#fff" stroke-width="1" fill="none"/></svg>
<svg style="left:979px;top:594px" width="8" height="9" viewBox="0 0 8 9"><rect x="0" y="0" width="8" height="1" fill="#fff"/><rect x="1.5" y="2.5" width="5" height="4" stroke="#fff" stroke-width="0.9" fill="none"/><rect x="0" y="8" width="8" height="1" fill="#fff"/></svg>
<svg style="left:991px;top:594px" width="9" height="9" viewBox="0 0 9 9"><circle cx="4.5" cy="4.5" r="4" stroke="#fff" stroke-width="0.9" fill="none"/><rect x="2.5" y="3" width="4" height="3.5" fill="#fff"/></svg>
<svg style="left:1004px;top:594px" width="9" height="9" viewBox="0 0 9 9"><path d="M0.5 3 H2.5 L5 0.8 V8.2 L2.5 6 H0.5Z" stroke="#fff" stroke-width="0.8" fill="none"/><path d="M6.5 3 C7.3 4 7.3 5 6.5 6" stroke="#fff" stroke-width="0.8" fill="none"/></svg>
<div class="t l" style="left:1018.5px;top:592px;color:#fff;font-size:10px;-webkit-text-stroke:0;--w:8;transform:scaleX(1.1991)">A</div>
<div class="t l" style="left:1031.7px;top:593px;color:#fff;--w:15;transform:scaleX(0.8556)">14:50</div>
<svg style="left:1057px;top:594px" width="10" height="10" viewBox="0 0 10 10"><path d="M0.5 0.5 H9.5 V7.5 H4 L2 9.5 V7.5 H0.5Z" stroke="#fff" stroke-width="0.9" fill="none"/></svg>
<div class="a" style="left:1077px;top:590px;width:1px;height:17px;background:#54606a"></div>

</body></html>
